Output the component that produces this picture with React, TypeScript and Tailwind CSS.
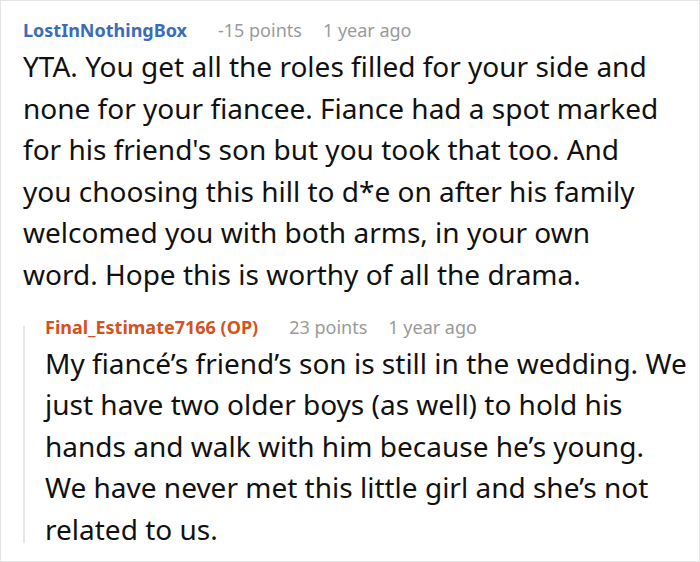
const first = [
  "YTA. You get all the roles filled for your side and",
  "none for your fiancee. Fiance had a spot marked",
  "for his friend's son but you took that too. And",
  "you choosing this hill to d*e on after his family",
  "welcomed you with both arms, in your own",
  "word. Hope this is worthy of all the drama.",
];

const reply = [
  "My fiancé’s friend’s son is still in the wedding. We",
  "just have two older boys (as well) to hold his",
  "hands and walk with him because he’s young.",
  "We have never met this little girl and she’s not",
  "related to us.",
];

const Meta = ({ name, color, points }: { name: string; color: string; points: string }) => (
  <div className="flex items-baseline text-[18px] leading-[26px]">
    <span className={`font-bold ${color}`}>{name}</span>
    <span className="ml-[31px] text-[#9a9a9a]">{points}</span>
    <span className="ml-[21px] text-[#9a9a9a]">1 year ago</span>
  </div>
);

const Body = ({ lines }: { lines: string[] }) => (
  <p className="mt-[3px] text-[28px] leading-[41.6px] text-[#111] whitespace-nowrap">
    {lines.map((l, i) => (
      <span key={i} className="block">{l}</span>
    ))}
  </p>
);

export default function App() {
  return (
    <div
      className="w-[700px] h-[562px] border border-[#e4e4e4] bg-white overflow-hidden"
      style={{ fontFamily: '"Noto Sans", "Open Sans", sans-serif' }}
    >
      <div className="pl-[22px] pt-[16px]">
        <Meta name="LostInNothingBox" color="text-[#3a6cb9]" points="-15 points" />
        <Body lines={first} />
      </div>

      <div className="ml-[22px] mt-[18px] flex">
        <div className="w-[2px] bg-[#e6e6e6] mt-[12px] mb-[8px]" />
        <div className="pl-[20px]">
          <Meta name="Final_Estimate7166 (OP)" color="text-[#d5511e]" points="23 points" />
          <Body lines={reply} />
        </div>
      </div>
    </div>
  );
}
